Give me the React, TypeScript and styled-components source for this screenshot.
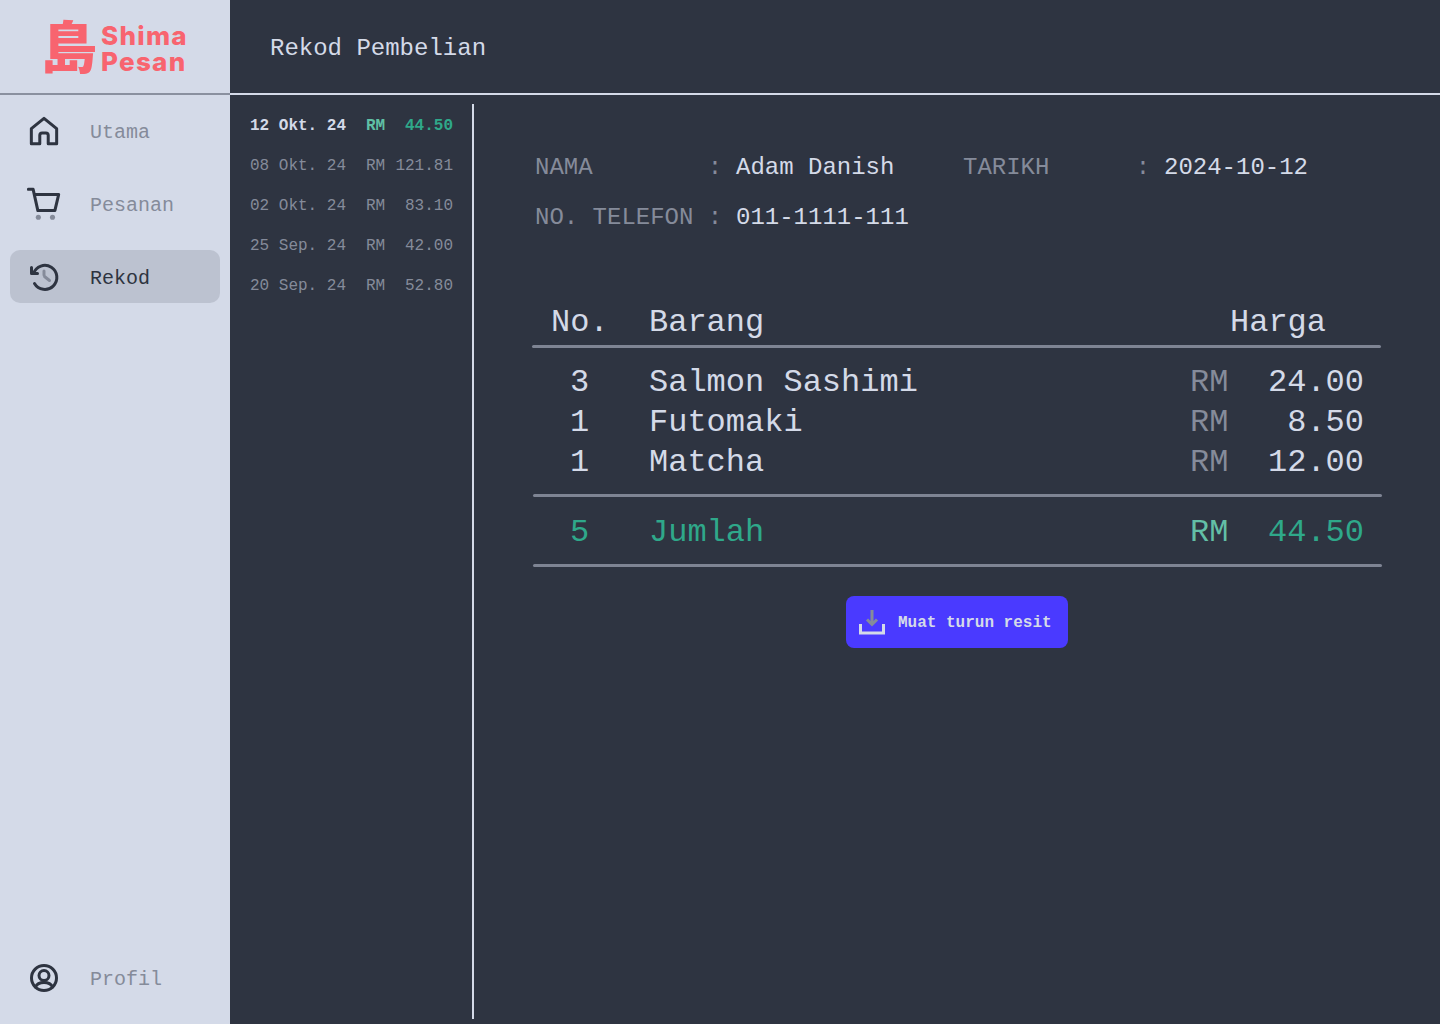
import React from "react";
import styled, { createGlobalStyle } from "styled-components";

const mono = `"Liberation Mono", "DejaVu Sans Mono", monospace`;
const dark = "#2e3441";
const light = "#d4dae8";
const muted = "#858b9a";
const green = "#2fa88a";

const Global = createGlobalStyle`
  html, body { margin: 0; padding: 0; background: ${dark}; }
  * { box-sizing: border-box; }
`;
const Page = styled.div`
  width: 1440px; height: 1024px; overflow: hidden;
  display: grid; grid-template-columns: 230px 1fr; background: ${dark}; font-family: ${mono};
`;
const Sidebar = styled.aside`
  background: ${light}; display: flex; flex-direction: column; height: 1024px;
`;
const Brand = styled.div`
  height: 95px; border-bottom: 2px solid #8a909f;
  display: flex; align-items: center; padding: 0 0 0 43px; gap: 6px;
`;
const BrandMark = styled.span`
  font-family: "Noto Sans CJK JP", sans-serif; font-weight: 900; font-size: 56px; line-height: 1;
  color: #f8646f; width: 52px; display: flex; justify-content: center; margin-top: -6px;
`;
const BrandText = styled.span`
  font-family: Inter, sans-serif; font-weight: 800; font-size: 26px; line-height: 26px; letter-spacing: 1.3px; color: #f8646f;
  display: block; width: 92px; margin-top: 4px;
`;
const Nav = styled.nav`
  flex: 1; display: flex; flex-direction: column; padding: 9px 10px 20px; gap: 20px;
`;
const NavItem = styled.div<{ $active?: boolean; $bottom?: boolean }>`
  height: 53px; border-radius: 10px; display: flex; align-items: center; padding-left: 14px; gap: 26px;
  background: ${p => (p.$active ? "#bcc2d0" : "transparent")};
  color: ${p => (p.$active ? dark : muted)};
  font-size: 20px;
  margin-top: ${p => (p.$bottom ? "auto" : "0")};
`;
const NavLabel = styled.span`
  padding-top: 3px;
`;
const IconBox = styled.span`
  width: 40px; height: 40px; display: flex; align-items: center; justify-content: center; flex: none;
`;
const Main = styled.main`
  display: flex; flex-direction: column; min-width: 0;
`;
const Header = styled.header`
  height: 95px; border-bottom: 2px solid ${light}; display: flex; align-items: center; padding: 4px 40px 0;
  color: ${light}; font-size: 24px;
`;
const Body = styled.div`
  flex: 1; display: grid; grid-template-columns: 244px 1fr; padding: 9px 0 5px;
`;
const List = styled.div`
  border-right: 2px solid ${light}; padding-top: 1px; display: flex; flex-direction: column;
`;
const ListRow = styled.div<{ $active?: boolean }>`
  height: 40px; display: grid; grid-template-columns: 116px 20px 67px; align-items: center;
  padding: 2px 0 0 20px; font-size: 16px; white-space: pre;
  font-weight: ${p => (p.$active ? 700 : 400)};
  color: ${p => (p.$active ? light : muted)};
`;
const ListRm = styled.span<{ $active?: boolean }>`
  color: ${p => (p.$active ? "#5fc0a5" : "inherit")};
`;
const ListAmt = styled.span<{ $active?: boolean }>`
  text-align: right; color: ${p => (p.$active ? green : "inherit")};
`;
const Detail = styled.section`
  padding: 47px 58px 0 58px; display: flex; flex-direction: column;
`;
const Info = styled.div`
  display: grid; grid-template-columns: 201px 227px 201px 1fr; row-gap: 16px; font-size: 24px; line-height: 34px; white-space: pre; padding-left: 3px;
`;
const InfoCell = styled.span`
  color: ${light};
`;
const InfoLabel = styled.span`
  color: ${muted};
`;
const Table = styled.div`
  margin-top: 67px; font-size: 32px; line-height: 40px; color: ${light};
`;
const Row = styled.div<{ $green?: boolean }>`
  display: grid; grid-template-columns: 98px 1fr 78px 96px; align-items: center; height: 40px; padding: 2px 18px 0 19px; white-space: pre;
  color: ${p => (p.$green ? green : light)};
`;
const No = styled.span`
  text-align: center; width: 57px;
`;
const Rm = styled.span<{ $green?: boolean }>`
  color: ${p => (p.$green ? "#63bfa6" : muted)};
`;
const Amt = styled.span`
  text-align: right;
`;
const HeadRow = styled.div`
  display: grid; grid-template-columns: 98px 1fr 115px; padding: 1px 37px 0 19px; white-space: pre; height: 40px; align-items: center;
`;
const Rule = styled.div<{ $mt: number; $mb: number; $left?: number; $right?: number }>`
  height: 3px; background: #7e8493; border-radius: 2px;
  margin: ${p => p.$mt}px ${p => p.$right ?? 0}px ${p => p.$mb}px ${p => p.$left ?? 0}px;
`;
const ButtonWrap = styled.div`
  display: flex; justify-content: center; margin-top: 29px;
`;
const Button = styled.button`
  width: 222px; height: 52px; border: 0; border-radius: 8px; background: #4a3aff; color: ${light};
  font-family: ${mono}; font-weight: 700; font-size: 16px; display: flex; align-items: center; gap: 13px; padding: 0 0 0 13px;
`;
const ButtonLabel = styled.span`
  padding-top: 2px;
`;

const Home = () => (
  <svg width="30" height="30" viewBox="0 0 32 32" fill="none" stroke={dark} strokeWidth="3.2" strokeLinejoin="round" strokeLinecap="round">
    <path d="M2.5 29.5V13.5L16 2.5L29.5 13.5V29.5H20.5V20.5A2.5 2.5 0 0 0 18 18H14A2.5 2.5 0 0 0 11.5 20.5V29.5Z" />
  </svg>
);
const Cart = () => (
  <svg width="34" height="34" viewBox="0 0 36 36" fill="none">
    <path d="M1.5 2.5H6.5L11.5 25H29.5L33.5 8H7.8" stroke={dark} strokeWidth="3.2" strokeLinejoin="round" strokeLinecap="round" />
    <circle cx="12" cy="32" r="2.7" fill={muted} />
    <circle cx="27" cy="32" r="2.7" fill={muted} />
  </svg>
);
const HistoryIcon = () => (
  <svg width="30" height="30" viewBox="0 0 30 30" fill="none" strokeWidth="3" strokeLinecap="round" strokeLinejoin="round">
    <path d="M15 13V9M15.5 14.5L20.5 18.5" stroke={muted} />
    <path d="M4.5 11.5A12 12 0 1 1 5.5 21.5" stroke={dark} />
    <path d="M2.5 5.5V11.5H8.5" stroke={dark} />
  </svg>
);
const Profile = () => (
  <svg width="30" height="30" viewBox="0 0 30 30" fill="none" stroke={dark} strokeWidth="3" strokeLinecap="round">
    <circle cx="15" cy="15" r="12.5" />
    <circle cx="15" cy="12.5" r="5" />
    <path d="M6.5 24C8 20.5 11 19.5 15 19.5C19 19.5 22 20.5 23.5 24" />
  </svg>
);
const Download = () => (
  <svg width="26" height="26" viewBox="0 0 26 26" fill="none" strokeWidth="3">
    <path d="M13 1V15M8 10.5L13 15.5L18 10.5" stroke={muted} />
    <path d="M1.5 15V24H24.5V15" stroke={light} strokeWidth="3" />
  </svg>
);

const history: [string, string, boolean][] = [
  ["12 Okt. 24", "44.50", true],
  ["08 Okt. 24", "121.81", false],
  ["02 Okt. 24", "83.10", false],
  ["25 Sep. 24", "42.00", false],
  ["20 Sep. 24", "52.80", false],
];
const items: [string, string, string][] = [
  ["3", "Salmon Sashimi", "24.00"],
  ["1", "Futomaki", "8.50"],
  ["1", "Matcha", "12.00"],
];

export default function App() {
  return (
    <Page>
      <Global />
      <Sidebar>
        <Brand>
          <BrandMark>島</BrandMark>
          <BrandText>Shima Pesan</BrandText>
        </Brand>
        <Nav>
          <NavItem><IconBox><Home /></IconBox><NavLabel>Utama</NavLabel></NavItem>
          <NavItem><IconBox><Cart /></IconBox><NavLabel>Pesanan</NavLabel></NavItem>
          <NavItem $active><IconBox><HistoryIcon /></IconBox><NavLabel>Rekod</NavLabel></NavItem>
          <NavItem $bottom><IconBox><Profile /></IconBox><NavLabel>Profil</NavLabel></NavItem>
        </Nav>
      </Sidebar>
      <Main>
        <Header>Rekod Pembelian</Header>
        <Body>
          <List>
            {history.map(([d, a, act]) => (
              <ListRow key={d} $active={act}>
                <span>{d}</span>
                <ListRm $active={act}>RM</ListRm>
                <ListAmt $active={act}>{a}</ListAmt>
              </ListRow>
            ))}
          </List>
          <Detail>
            <Info>
              <InfoLabel>{"NAMA        :"}</InfoLabel><InfoCell>Adam Danish</InfoCell>
              <InfoLabel>{"TARIKH      :"}</InfoLabel><InfoCell>2024-10-12</InfoCell>
              <InfoLabel>NO. TELEFON :</InfoLabel><InfoCell>011-1111-111</InfoCell>
            </Info>
            <Table>
              <HeadRow><span>No.</span><span>Barang</span><span>Harga</span></HeadRow>
              <Rule $mt={3} $mb={13} $right={1} />
              {items.map(([n, name, price]) => (
                <Row key={name}>
                  <No>{n}</No><span>{name}</span><Rm>RM</Rm><Amt>{price}</Amt>
                </Row>
              ))}
              <Rule $mt={13} $mb={14} $left={1} />
              <Row $green><No>5</No><span>Jumlah</span><Rm $green>RM</Rm><Amt>44.50</Amt></Row>
              <Rule $mt={13} $mb={0} $left={1} />
            </Table>
            <ButtonWrap>
              <Button><Download /><ButtonLabel>Muat turun resit</ButtonLabel></Button>
            </ButtonWrap>
          </Detail>
        </Body>
      </Main>
    </Page>
  );
}
